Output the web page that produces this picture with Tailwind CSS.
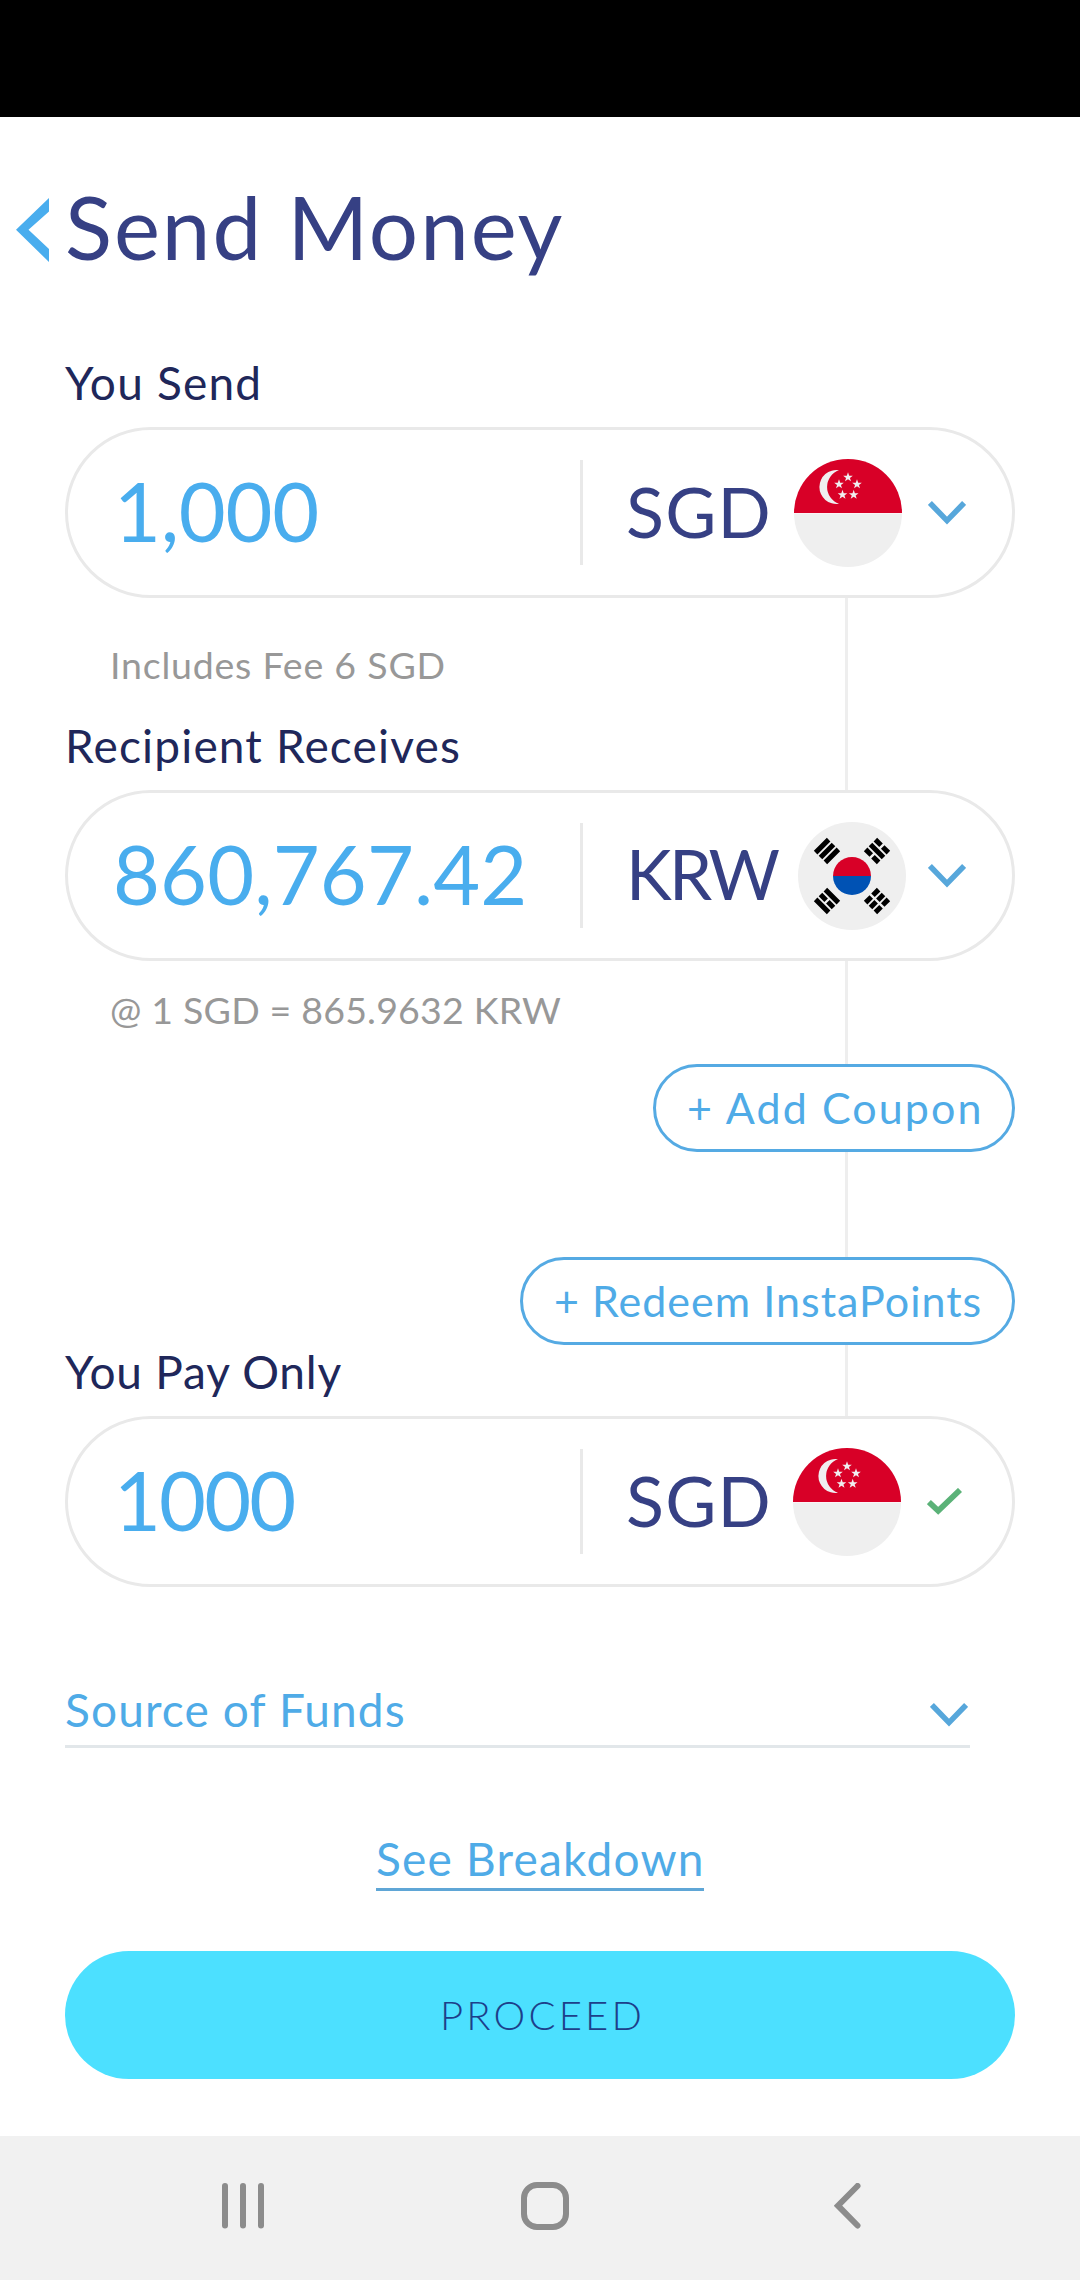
<!DOCTYPE html>
<html lang="en">
<head>
<meta charset="utf-8">
<title>Send Money</title>
<script src="https://cdn.jsdelivr.net/npm/@tailwindcss/browser@4"></script>
</head>
<body class="bg-white">
<svg class="hidden">
  <defs>
    <path id="star" d="M0 -5 L1.2 -1.6 L4.8 -1.55 L1.95 .65 L3 4.05 L0 2.05 L-3 4.05 L-1.95 .65 L-4.8 -1.55 L-1.2 -1.6 Z"/>
    <symbol id="flag-sg" viewBox="0 0 108 108">
      <circle cx="54" cy="54" r="54" fill="#efefef"/>
      <path d="M0 54 A54 54 0 0 1 108 54 Z" fill="#d80027"/>
      <path d="M0 54.5 H108" stroke="#fbf3f5" stroke-width="1"/>
      <path d="M45 11.2 A17 17 0 1 0 45 44.8 A17.8 17.8 0 0 1 45 11.2 Z" fill="#f0eef0"/>
      <g fill="#f0eef0">
        <use href="#star" x="54" y="18.3"/>
        <use href="#star" x="45" y="25.3"/>
        <use href="#star" x="63" y="25.3"/>
        <use href="#star" x="48.5" y="35.8"/>
        <use href="#star" x="59.7" y="35.8"/>
      </g>
    </symbol>
    <symbol id="flag-kr" viewBox="0 0 108 108">
      <circle cx="54" cy="54" r="54" fill="#efefef"/>
      <path d="M35 54 A19 19 0 0 1 73 54 Z" fill="#d80027"/>
      <path d="M35 54 A19 19 0 0 0 73 54 Z" fill="#0052b4"/>
      <g stroke="#000" stroke-width="5">
        <path transform="translate(29 29) rotate(-45)" d="M-9.2 -6.9 H9.2 M-9.2 0 H9.2 M-9.2 6.9 H9.2"/>
        <path transform="translate(79 29) rotate(45)" d="M-9.2 -6.9 H-1.2 M1.2 -6.9 H9.2 M-9.2 0 H9.2 M-9.2 6.9 H-1.2 M1.2 6.9 H9.2"/>
        <path transform="translate(29 79) rotate(45)" d="M-9.2 -6.9 H9.2 M-9.2 0 H-1.2 M1.2 0 H9.2 M-9.2 6.9 H9.2"/>
        <path transform="translate(79 79) rotate(-45)" d="M-9.2 -6.9 H-1.2 M1.2 -6.9 H9.2 M-9.2 0 H-1.2 M1.2 0 H9.2 M-9.2 6.9 H-1.2 M1.2 6.9 H9.2"/>
      </g>
    </symbol>
    <symbol id="chevron" viewBox="0 0 38 24">
      <path d="M1.9 2 L19 19.6 L36.1 2" fill="none" stroke="#57a7db" stroke-width="5.6"/>
    </symbol>
  </defs>
</svg>

<div class="flex h-[2280px] w-[1080px] flex-col overflow-hidden bg-white font-[Lato,sans-serif]">
  <div class="h-[117px] shrink-0 bg-black"></div>

  <header class="mt-14 flex h-[104px] shrink-0 items-start">
    <svg class="mt-[25px] ml-4 h-16 w-[33px]" viewBox="0 0 33 64"><path d="M33 0 V13.5 L12.5 31.8 L33 51 V64 L0 31.8 Z" fill="#49adee"/></svg>
    <h1 class="mt-0.5 ml-4 text-[87px] leading-[104px] tracking-[2px] whitespace-nowrap text-[#364084]">Send Money</h1>
  </header>

  <main class="relative flex shrink-0 flex-col px-[65px]">
    <!-- line joining the three amount fields -->
    <div class="absolute top-[200px] left-[845px] h-[1000px] w-[3px] bg-[#eeeeee]"></div>

    <h2 class="mt-[78px] text-[46px] leading-[56px] tracking-[1.2px] text-[#20275a]">You Send</h2>
    <div class="relative mt-4 flex h-[171px] items-center rounded-full border-[3px] border-[#e9e9e9] bg-white">
      <div class="w-[512px] pb-1 pl-[46px] text-[81px] leading-[96px] tracking-[-0.3px] text-[#49adee]">1,000</div>
      <div class="h-[105px] w-[3px] bg-[#e9e9e9]"></div>
      <div class="w-[211px] pb-[3px] pl-[43px] text-[70px] leading-[84px] tracking-[1.2px] text-[#364084]">SGD</div>
      <svg class="mt-px size-[108px]"><use href="#flag-sg"/></svg>
      <svg class="mt-px mr-[46px] ml-auto h-6 w-[38px]"><use href="#chevron"/></svg>
    </div>
    <p class="mt-[43px] pl-[45px] text-[37.5px] leading-[48px] tracking-[0.78px] text-[#989898]">Includes Fee 6 SGD</p>

    <h2 class="mt-[29px] text-[46px] leading-[56px] tracking-[1.16px] text-[#20275a]">Recipient Receives</h2>
    <div class="relative mt-4 flex h-[171px] items-center rounded-full border-[3px] border-[#e9e9e9] bg-white">
      <div class="w-[512px] pb-1 pl-[45px] text-[81px] leading-[96px] tracking-[0.1px] text-[#49adee]">860,767.42</div>
      <div class="h-[105px] w-[3px] bg-[#e9e9e9]"></div>
      <div class="w-[215px] pb-[3px] pl-[43px] text-[69px] leading-[84px] tracking-[-2.8px] text-[#364084]">KRW</div>
      <svg class="mt-px size-[108px]"><use href="#flag-kr"/></svg>
      <svg class="mt-px mr-[46px] ml-auto h-6 w-[38px]"><use href="#chevron"/></svg>
    </div>
    <p class="mt-[25px] pl-[45px] text-[37.5px] leading-[48px] tracking-[0.18px] text-[#989898]">@ 1 SGD = 865.9632 KRW</p>

    <button class="relative mt-[30px] h-[88px] w-[362px] self-end rounded-full border-[3px] border-[#55aae3] bg-white pb-px pl-[31px] text-left text-[43px] leading-[52px] tracking-[2.1px] whitespace-nowrap text-[#4fabe7]">+ Add Coupon</button>
    <button class="relative mt-[105px] h-[88px] w-[495px] self-end rounded-full border-[3px] border-[#55aae3] bg-white pb-px pl-[31px] text-left text-[43px] leading-[52px] tracking-[1.02px] whitespace-nowrap text-[#4fabe7]">+ Redeem InstaPoints</button>

    <h2 class="-mt-px text-[46px] leading-[56px] tracking-[0.8px] text-[#20275a]">You Pay Only</h2>
    <div class="relative mt-4 flex h-[171px] items-center rounded-full border-[3px] border-[#e9e9e9] bg-white">
      <div class="w-[512px] pb-1 pl-[46px] text-[81px] leading-[96px] tracking-[-1.9px] text-[#49adee]">1000</div>
      <div class="h-[105px] w-[3px] bg-[#e9e9e9]"></div>
      <div class="w-[210px] pb-[3px] pl-[43px] text-[70px] leading-[84px] tracking-[1.2px] text-[#364084]">SGD</div>
      <svg class="mt-px size-[108px]"><use href="#flag-sg"/></svg>
      <svg class="mr-[50px] ml-auto h-[27px] w-[35px]" viewBox="0 0 35 27"><path d="M1.9 14 L11.2 22.8 L33 2" fill="none" stroke="#5bb278" stroke-width="5.8"/></svg>
    </div>

    <div class="mt-[94px] flex h-[67px] w-[905px] items-start justify-between border-b-[3px] border-[#e2e7ea]">
      <span class="mt-px text-[46px] leading-[56px] tracking-[1.13px] text-[#4fabe7]">Source of Funds</span>
      <svg class="mt-[22px] mr-0.5 h-6 w-[38px]"><use href="#chevron"/></svg>
    </div>

    <a class="mt-[83px] ml-[311px] h-[60px] w-[328px] border-b-[3px] border-[#5fa6d6] text-[46px] leading-[56px] tracking-[1.22px] whitespace-nowrap text-[#4fabe7]">See Breakdown</a>

    <button class="mt-[60px] h-32 rounded-full bg-[#4ce0ff] pb-px pl-[5px] text-center text-[40px] leading-[48px] font-light tracking-[3.2px] text-[#1d3f8a]">PROCEED</button>
  </main>

  <nav class="mt-[57px] flex h-36 shrink-0 items-start bg-[#f1f1f1]">
    <svg class="mt-[47px] ml-[221px] h-[46px] w-[44px]" viewBox="0 0 44 46"><path d="M4 3 V42.5 M22 3 V42.5 M40 3 V42.5" stroke="#8c8c8c" stroke-width="6" stroke-linecap="round"/></svg>
    <svg class="mt-[46px] ml-64 size-12" viewBox="0 0 48 48"><rect x="3" y="3" width="42" height="42" rx="13" fill="none" stroke="#8c8c8c" stroke-width="6"/></svg>
    <svg class="mt-[47px] ml-[265px] h-[46px] w-[27px]" viewBox="0 0 27 46"><path d="M23.5 3 L4 22.7 L23.5 42.5" fill="none" stroke="#8c8c8c" stroke-width="6" stroke-linecap="round"/></svg>
  </nav>
</div>
</body>
</html>
